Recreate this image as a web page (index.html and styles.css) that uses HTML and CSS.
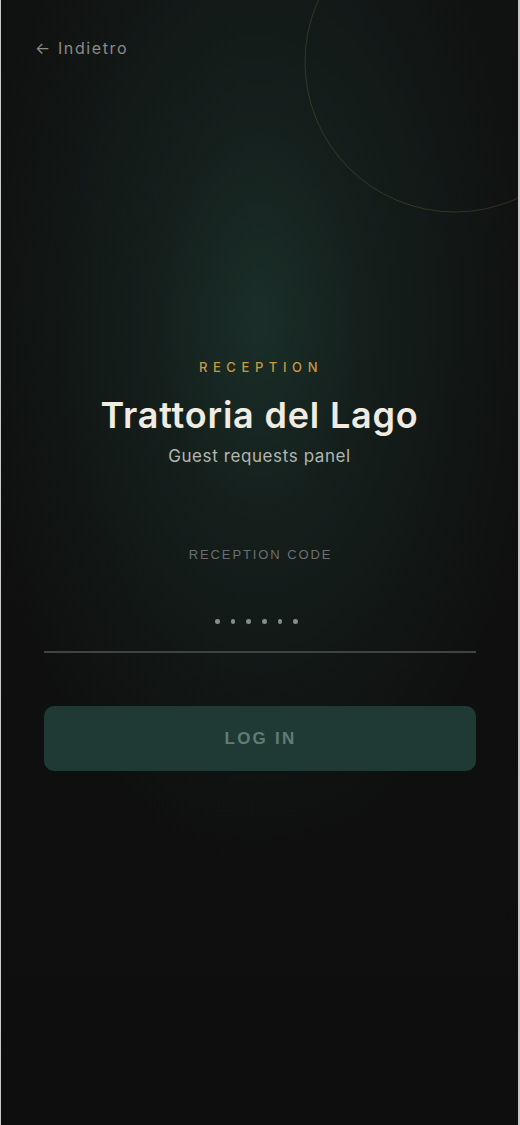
FILE: index.html
```html
<!DOCTYPE html>
<html lang="it">
<head>
<meta charset="utf-8">
<title>Reception – Trattoria del Lago</title>
<link rel="stylesheet" href="styles.css">
</head>
<body>
<div class="app">
  <svg class="ring" width="320" height="320" viewBox="0 0 320 320" aria-hidden="true">
    <circle cx="160" cy="160" r="150" fill="none" stroke="rgba(201,160,74,0.2)" stroke-width="1"/>
  </svg>
  <header class="top">
    <a class="back" href="#">← Indietro</a>
  </header>
  <main class="content">
    <section class="brand">
      <div class="eyebrow">RECEPTION</div>
      <h1 class="title">Trattoria del Lago</h1>
      <p class="subtitle">Guest requests panel</p>
    </section>
    <form class="login">
      <label class="code-label">RECEPTION CODE</label>
      <div class="code-field">
        <span class="dot"></span><span class="dot"></span><span class="dot"></span><span class="dot"></span><span class="dot"></span><span class="dot"></span>
      </div>
      <button type="button" class="btn">LOG IN</button>
    </form>
  </main>
</div>
</body>
</html>
```
FILE: styles.css
```css
html, body {
  margin: 0;
  padding: 0;
  background: #c9c9cd;
}
body {
  width: 520px;
  height: 1125px;
  display: flex;
}
.app {
  position: relative;
  overflow: hidden;
  margin-left: 1px;
  width: 517px;
  height: 1125px;
  background:
    radial-gradient(ellipse 280px 540px at 258px 320px, rgba(27,48,42,0.95) 0%, rgba(22,36,32,0.7) 40%, rgba(14,14,14,0) 100%),
    linear-gradient(#101111, #0e0e0e);
  font-family: "Inter", "Liberation Sans", sans-serif;
  display: flex;
  flex-direction: column;
}
.ring {
  position: absolute;
  left: 294px;
  top: -98px;
}
.top {
  padding: 38px 0 0 34px;
  height: 24px;
}
.back {
  color: #8b8b88;
  text-decoration: none;
  font-size: 16px;
  letter-spacing: 1.6px;
  font-family: "Inter", "Liberation Sans", sans-serif;
}
.content {
  display: flex;
  flex-direction: column;
  align-items: center;
  padding: 297px 43px 0 43px;
}
.brand {
  display: flex;
  flex-direction: column;
  align-items: center;
}
.eyebrow {
  color: #c49a45;
  font-size: 13px;
  letter-spacing: 5.6px;
  line-height: 16px;
  font-weight: 500;
  margin-left: 3px;
}
.title {
  margin: 18px 0 0;
  color: #f1ece2;
  font-size: 36px;
  line-height: 44px;
  font-weight: 600;
  letter-spacing: 0.8px;
}
.subtitle {
  margin: 8px 0 0;
  color: #b4b6b0;
  font-size: 17px;
  line-height: 22px;
  letter-spacing: 0.6px;
}
.login {
  width: 432px;
  display: flex;
  flex-direction: column;
  align-items: center;
  margin-top: 80px;
}
.code-label {
  font-family: "Liberation Sans", Arial, sans-serif;
  color: #6b6f6d;
  font-size: 13px;
  letter-spacing: 1.9px;
  line-height: 16px;
  margin-left: 2px;
}
.code-field {
  width: 100%;
  height: 57px;
  margin-top: 33px;
  border-bottom: 2px solid #3f4442;
  display: flex;
  justify-content: center;
  align-items: flex-start;
  gap: 11.2px;
  padding: 23px 6px 0 0;
  box-sizing: border-box;
}
.dot {
  width: 4.5px;
  height: 4.5px;
  border-radius: 50%;
  background: #878c89;
}
.btn {
  margin-top: 53px;
  width: 100%;
  height: 65px;
  border: none;
  border-radius: 10px;
  background: #1f3a35;
  color: #5e7d74;
  font-family: "Liberation Sans", Arial, sans-serif;
  font-weight: 700;
  font-size: 17px;
  letter-spacing: 2.2px;
  padding: 0 0 0 2px;
}
```
